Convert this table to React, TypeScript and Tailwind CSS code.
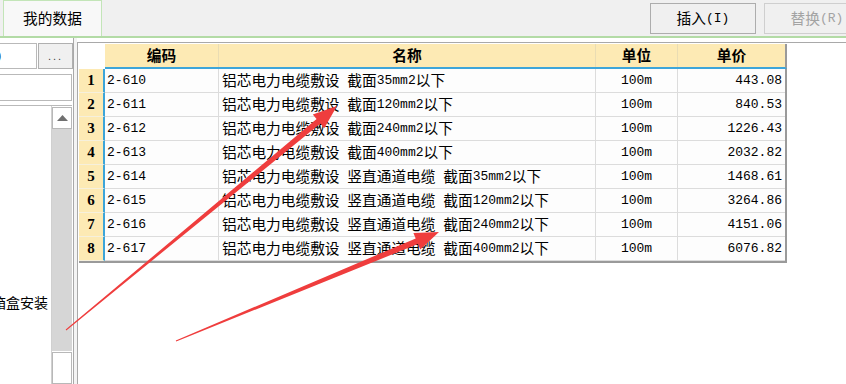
const rows = [
  ["2-610", "铝芯电力电缆敷设 截面35mm2以下", "443.08"],
  ["2-611", "铝芯电力电缆敷设 截面120mm2以下", "840.53"],
  ["2-612", "铝芯电力电缆敷设 截面240mm2以下", "1226.43"],
  ["2-613", "铝芯电力电缆敷设 截面400mm2以下", "2032.82"],
  ["2-614", "铝芯电力电缆敷设 竖直通道电缆 截面35mm2以下", "1468.61"],
  ["2-615", "铝芯电力电缆敷设 竖直通道电缆 截面120mm2以下", "3264.86"],
  ["2-616", "铝芯电力电缆敷设 竖直通道电缆 截面240mm2以下", "4151.06"],
  ["2-617", "铝芯电力电缆敷设 竖直通道电缆 截面400mm2以下", "6076.82"],
];

// ascii runs in a mono face, chinese in noto
function Mixed({ text }: { text: string }) {
  const parts = text.match(/[\x00-\x7f]+|[^\x00-\x7f]+/g) || [];
  return (
    <>
      {parts.map((p, i) =>
        /^[\x00-\x7f]/.test(p) ? (
          <span key={i} className="font-['Liberation_Mono',monospace] text-[13px]">{p}</span>
        ) : (
          <span key={i} className="font-['Noto_Sans_CJK_SC',sans-serif] text-[14.7px]">{p}</span>
        )
      )}
    </>
  );
}

function Arrows() {
  return (
    <svg className="absolute inset-0 pointer-events-none" width="846" height="384" viewBox="0 0 846 384">
      <polygon
        fill="#ef3d3d"
        points="65.7,329.6 316.6,119 312.8,114.4 337,106 324.2,128.2 320.4,123.6 66.3,330.4"
      />
      <polygon
        fill="#ef3d3d"
        points="175.8,340.5 415.7,238.4 413.4,232.9 439,232 420.3,249.5 418,244 176.2,341.5"
      />
    </svg>
  );
}

export default function App() {
  return (
    <div className="relative w-[846px] h-[384px] overflow-hidden bg-white text-black flex flex-col">
      {/* top bar */}
      <div className="h-[38px] shrink-0 bg-[#f0f0f0] border-b-2 border-[#b3dba6] flex items-start overflow-hidden">
        <div className="ml-[3px] w-[99px] h-[36px] shrink-0 bg-[#f8f8f8] border border-b-0 border-[#c3e5b8] flex items-center justify-center">
          <span className="font-['Noto_Sans_CJK_SC',sans-serif] text-[14.7px]">我的数据</span>
        </div>
        <div className="ml-[548px] mt-[3px] w-[106px] h-[31px] shrink-0 border border-[#adadad] bg-[#f0f0f0] flex items-center justify-center whitespace-pre">
          <Mixed text="插入(I)" />
        </div>
        <div className="ml-[8px] mt-[3px] w-[106px] h-[31px] shrink-0 border border-[#cfcfcf] bg-[#f0f0f0] flex items-center justify-center whitespace-pre text-[#a3a3a3]">
          <Mixed text="替换(R)" />
        </div>
      </div>

      <div className="flex flex-1 min-h-0">
        {/* left panel */}
        <div className="w-[74px] shrink-0 border-r border-[#a9a9a9] flex flex-col">
          <div className="mt-[5px] h-[26px] flex">
            <div className="w-[37px] h-full border border-l-0 border-[#b9b9b9] overflow-hidden flex items-center">
              <span className="-ml-[7px] font-['Noto_Sans_CJK_SC',sans-serif] text-[14.7px]">0</span>
            </div>
            <div className="ml-[1px] w-[35px] h-full border border-[#b0b0b0] bg-[#f0f0f0] flex items-center justify-center text-[11px] tracking-[2px] text-[#444] font-['Liberation_Sans',sans-serif]">
              ...
            </div>
          </div>
          <div className="mt-[5px] h-[27px] border border-l-0 border-[#b9b9b9] mr-[1px]"></div>
          <div className="mt-[4px] flex-1 flex border-t border-[#b9b9b9] mr-[1px] overflow-hidden">
            <div className="flex-1 overflow-hidden relative">
              <div className="mt-[186px] whitespace-nowrap -ml-[36px] font-['Noto_Sans_CJK_SC',sans-serif] text-[14px]">接线箱盒安装</div>
            </div>
            <div className="w-[21px] flex flex-col border-l border-[#d0d0d0]">
              <div className="mt-[1px] h-[22px] bg-white border border-[#b8b8b8] flex items-center justify-center">
                <svg width="11" height="6" viewBox="0 0 11 6"><polygon points="5.5,0 11,6 0,6" fill="#707070" /></svg>
              </div>
              <div className="h-[222px] bg-[#d6d6d6]"></div>
              <div className="flex-1 mt-[1px] bg-white border border-[#b8b8b8]"></div>
            </div>
          </div>
        </div>

        {/* splitter */}
        <div className="w-[3px] shrink-0 bg-[#f4f4f4]"></div>

        {/* grid panel */}
        <div className="flex-1 mt-[4px] border-t border-l border-[#a9a9a9] pt-[1px] pl-[1px]">
          <div className="w-[708px] whitespace-pre">
            {/* header */}
            <div className="flex h-[25px]">
              <div className="w-[26px] bg-white"></div>
              <div className="flex flex-1 bg-[#fdeab4] border-b-2 border-[#3da5d9] border-r-2 border-r-[#9a9a9a] font-['Noto_Sans_CJK_SC',sans-serif] font-bold text-[14.7px]">
                <div className="w-[114px] border-r border-[#e9dcb3] flex items-center justify-center">编码</div>
                <div className="w-[377px] border-r border-[#e9dcb3] flex items-center justify-center">名称</div>
                <div className="w-[82px] border-r border-[#e9dcb3] flex items-center justify-center">单位</div>
                <div className="flex-1 flex items-center justify-center">单价</div>
              </div>
            </div>
            {/* body */}
            <div className="border-b-2 border-[#9a9a9a]">
              {rows.map((r, i) => (
                <div key={r[0]} className="flex h-[24px]">
                  <div className="w-[26px] bg-[#fdeab4] border-r-2 border-[#3da5d9] border-b border-b-[#f6f0dc] flex items-center justify-center font-['Liberation_Serif',serif] font-bold text-[15px]">
                    {i + 1}
                  </div>
                  <div className="flex flex-1 bg-[#fdfdfd] border-r-2 border-[#9a9a9a]">
                    <div className="w-[114px] border-r border-b border-[#dcdcdc] pl-[2px] flex items-center">
                      <Mixed text={r[0]} />
                    </div>
                    <div className="w-[377px] border-r border-b border-[#dcdcdc] pl-[3px] flex items-center">
                      <Mixed text={r[1]} />
                    </div>
                    <div className="w-[82px] border-r border-b border-[#dcdcdc] flex items-center justify-center">
                      <Mixed text="100m" />
                    </div>
                    <div className="flex-1 border-b border-[#dcdcdc] pr-[3px] flex items-center justify-end">
                      <Mixed text={r[2]} />
                    </div>
                  </div>
                </div>
              ))}
            </div>
          </div>
        </div>
      </div>

      <Arrows />
    </div>
  );
}
